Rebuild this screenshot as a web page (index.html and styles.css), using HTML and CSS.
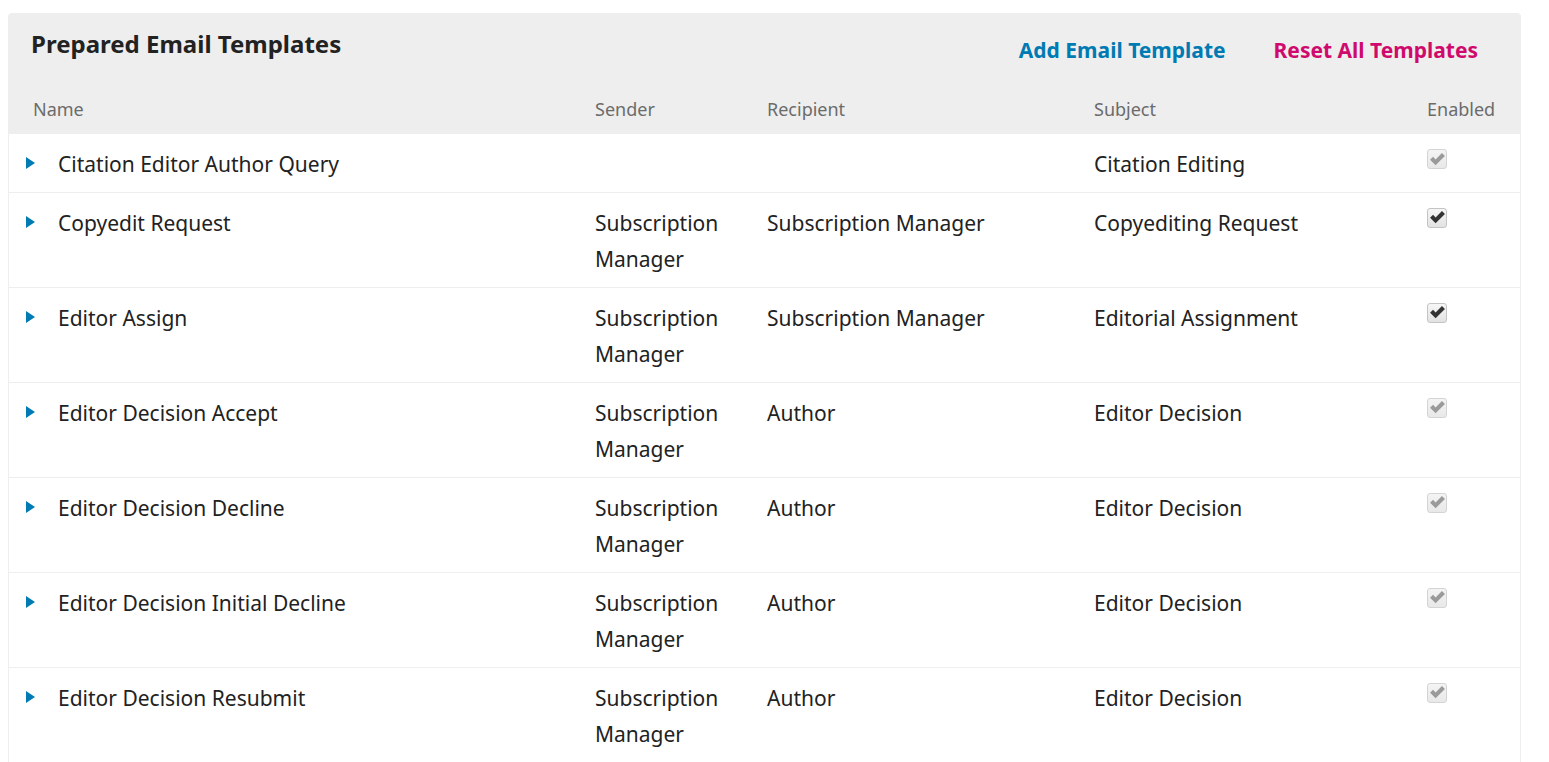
FILE: index.html
```html
<!DOCTYPE html>
<html>
<head>
<meta charset="utf-8">
<link rel="stylesheet" href="styles.css">
</head>
<body>
<div class="panel">
  <div class="panel-head">
    <div class="title-bar">
      <h2 class="title">Prepared Email Templates</h2>
      <div class="actions">
        <a class="action add">Add Email Template</a>
        <a class="action reset">Reset All Templates</a>
      </div>
    </div>
    <div class="grid cols">
      <div class="col-name">Name</div>
      <div>Sender</div>
      <div>Recipient</div>
      <div>Subject</div>
      <div>Enabled</div>
    </div>
  </div>

  <div class="grid row">
    <div class="cell-name"><span class="arrow"></span><span>Citation Editor Author Query</span></div>
    <div class="cell"></div>
    <div class="cell"></div>
    <div class="cell">Citation Editing</div>
    <div class="cell"><span class="check disabled"><svg viewBox="0 0 16 16"><path d="M1 8.3 L3.8 5.5 L6.2 7.9 L12.2 1.9 L15 4.7 L6.2 13.5 Z"/></svg></span></div>
  </div>

  <div class="grid row">
    <div class="cell-name"><span class="arrow"></span><span>Copyedit Request</span></div>
    <div class="cell">Subscription Manager</div>
    <div class="cell">Subscription Manager</div>
    <div class="cell">Copyediting Request</div>
    <div class="cell"><span class="check"><svg viewBox="0 0 16 16"><path d="M1 8.3 L3.8 5.5 L6.2 7.9 L12.2 1.9 L15 4.7 L6.2 13.5 Z"/></svg></span></div>
  </div>

  <div class="grid row">
    <div class="cell-name"><span class="arrow"></span><span>Editor Assign</span></div>
    <div class="cell">Subscription Manager</div>
    <div class="cell">Subscription Manager</div>
    <div class="cell">Editorial Assignment</div>
    <div class="cell"><span class="check"><svg viewBox="0 0 16 16"><path d="M1 8.3 L3.8 5.5 L6.2 7.9 L12.2 1.9 L15 4.7 L6.2 13.5 Z"/></svg></span></div>
  </div>

  <div class="grid row">
    <div class="cell-name"><span class="arrow"></span><span>Editor Decision Accept</span></div>
    <div class="cell">Subscription Manager</div>
    <div class="cell">Author</div>
    <div class="cell">Editor Decision</div>
    <div class="cell"><span class="check disabled"><svg viewBox="0 0 16 16"><path d="M1 8.3 L3.8 5.5 L6.2 7.9 L12.2 1.9 L15 4.7 L6.2 13.5 Z"/></svg></span></div>
  </div>

  <div class="grid row">
    <div class="cell-name"><span class="arrow"></span><span>Editor Decision Decline</span></div>
    <div class="cell">Subscription Manager</div>
    <div class="cell">Author</div>
    <div class="cell">Editor Decision</div>
    <div class="cell"><span class="check disabled"><svg viewBox="0 0 16 16"><path d="M1 8.3 L3.8 5.5 L6.2 7.9 L12.2 1.9 L15 4.7 L6.2 13.5 Z"/></svg></span></div>
  </div>

  <div class="grid row">
    <div class="cell-name"><span class="arrow"></span><span>Editor Decision Initial Decline</span></div>
    <div class="cell">Subscription Manager</div>
    <div class="cell">Author</div>
    <div class="cell">Editor Decision</div>
    <div class="cell"><span class="check disabled"><svg viewBox="0 0 16 16"><path d="M1 8.3 L3.8 5.5 L6.2 7.9 L12.2 1.9 L15 4.7 L6.2 13.5 Z"/></svg></span></div>
  </div>

  <div class="grid row">
    <div class="cell-name"><span class="arrow"></span><span>Editor Decision Resubmit</span></div>
    <div class="cell">Subscription Manager</div>
    <div class="cell">Author</div>
    <div class="cell">Editor Decision</div>
    <div class="cell"><span class="check disabled"><svg viewBox="0 0 16 16"><path d="M1 8.3 L3.8 5.5 L6.2 7.9 L12.2 1.9 L15 4.7 L6.2 13.5 Z"/></svg></span></div>
  </div>
</div>
</body>
</html>
```
FILE: styles.css
```css
html, body {
  margin: 0;
  padding: 0;
  background: #fff;
}
body {
  padding: 13px 28px 0 8px;
  font-family: "Noto Sans", "Open Sans", sans-serif;
  color: #222;
}
.panel {
  border-left: 1px solid #eee;
  border-right: 1px solid #eee;
  border-radius: 4px 4px 0 0;
  overflow: hidden;
}
.panel-head {
  background: #eee;
}
.title-bar {
  display: flex;
  justify-content: space-between;
  align-items: flex-start;
  padding: 15px 42px 0 22px;
  height: 62px;
  box-sizing: border-box;
}
.title {
  margin: 0;
  font-size: 24px;
  font-weight: 700;
  line-height: 32px;
  color: #222;
}
.actions {
  display: flex;
  gap: 48px;
  padding-top: 7px;
}
.action {
  font-size: 21px;
  font-weight: 700;
  line-height: 30px;
  cursor: pointer;
}
.add { color: #007ab2; }
.reset { color: #d00a6c; }
.grid {
  display: grid;
  grid-template-columns: 586px 172px 327px 333px 1fr;
}
.cols {
  height: 59px;
  font-size: 18px;
  color: #6b6b6b;
  align-items: center;
  padding-top: 8px;
  box-sizing: border-box;
}
.col-name {
  padding-left: 24px;
}
.row {
  border-bottom: 1px solid #eee;
  padding: 12px 0 9px;
  font-size: 21px;
  line-height: 36.5px;
  color: #222;
}
.cell-name {
  display: flex;
  align-items: flex-start;
}
.arrow {
  width: 0;
  height: 0;
  border-top: 6px solid transparent;
  border-bottom: 6px solid transparent;
  border-left: 9px solid #007ab2;
  margin: 11px 0 0 17px;
  flex: none;
}
.cell-name span:last-child {
  margin-left: 23px;
}
.cell {
  padding-right: 20px;
}
.check {
  display: inline-flex;
  align-items: center;
  justify-content: center;
  width: 20px;
  height: 20px;
  box-sizing: border-box;
  border: 1px solid #c4c4c4;
  border-radius: 3px;
  background: linear-gradient(#f6f6f6, #e2e2e2);
  margin-top: 3px;
  vertical-align: top;
}
.check svg {
  width: 17px;
  height: 17px;
  flex: none;
  fill: #333;
}
.check.disabled {
  border-color: #d4d4d4;
  background: linear-gradient(#f4f4f4, #e8e8e8);
}
.check.disabled svg {
  fill: #9a9a9a;
}
```
